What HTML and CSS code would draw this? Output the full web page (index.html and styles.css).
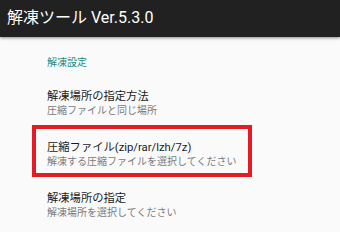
FILE: index.html
```html
<!DOCTYPE html>
<html lang="ja">
<head>
<meta charset="utf-8">
<link rel="stylesheet" href="styles.css">
</head>
<body>
<header class="appbar">解凍ツール Ver.5.3.0</header>
<main class="content">
  <div class="category">解凍設定</div>
  <div class="pref pref-first">
    <div class="pref-title">解凍場所の指定方法</div>
    <div class="pref-summary">圧縮ファイルと同じ場所</div>
  </div>
  <div class="pref pref-marked">
    <div class="pref-title">圧縮ファイル(zip/rar/lzh/7z)</div>
    <div class="pref-summary">解凍する圧縮ファイルを選択してください</div>
    <div class="highlight"></div>
  </div>
  <div class="pref">
    <div class="pref-title">解凍場所の指定</div>
    <div class="pref-summary">解凍場所を選択してください</div>
  </div>
</main>
</body>
</html>
```
FILE: styles.css
```css
html, body {
  margin: 0;
  padding: 0;
}
body {
  width: 340px;
  height: 232px;
  overflow: hidden;
  background: #fafafa;
  font-family: Roboto, "Noto Sans CJK JP", sans-serif;
}
.appbar {
  position: relative;
  z-index: 1;
  height: 37px;
  line-height: 35px;
  padding-left: 7px;
  background: #212121;
  color: #ffffff;
  font-size: 16px;
  box-shadow: 0 1px 3px rgba(0, 0, 0, 0.45);
}
.content {
  padding-left: 47px;
}
.category {
  margin-top: 19px;
  font-size: 10px;
  line-height: 14px;
  color: #1b8a7e;
}
.pref {
  position: relative;
  height: 51px;
}
.pref-first {
  margin-top: 20px;
}
.pref-title {
  font-size: 11.3px;
  line-height: 14px;
  color: #1a1a1a;
}
.pref-summary {
  font-size: 10px;
  line-height: 14px;
  color: #7a7a7a;
}
.highlight {
  position: absolute;
  left: -15px;
  top: -16px;
  width: 212px;
  height: 44px;
  border: 4px solid #e31b23;
}
```
